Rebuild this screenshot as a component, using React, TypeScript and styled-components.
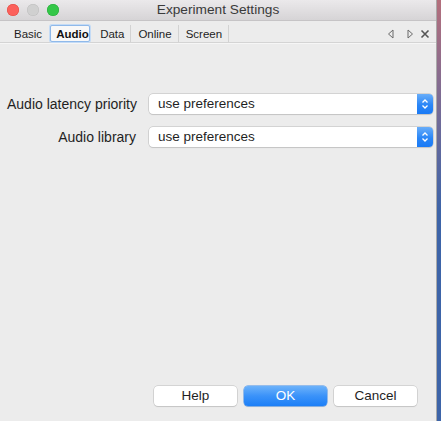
import React from 'react'
import styled, { createGlobalStyle } from 'styled-components'

const GlobalStyle = createGlobalStyle`
  html, body {
    margin: 0;
    padding: 0;
    height: 100%;
  }
  body {
    background: linear-gradient(180deg, #b46f7c 0%, #6c6a9a 30%, #3d64a8 50%, #3d64a8 100%);
    font-family: "Liberation Sans", Arial, sans-serif;
    overflow: hidden;
  }
`

const Desktop = styled.div`
  display: flex;
  width: 441px;
  height: 421px;
`

const Window = styled.div`
  width: 436px;
  height: 421px;
  border-right: 1px solid #a9a9a9;
  background: #ececec;
  display: flex;
  flex-direction: column;
`

const TitleBar = styled.div`
  height: 20px;
  display: grid;
  grid-template-columns: 1fr auto 1fr;
  align-items: center;
  padding: 0 7px;
  background: linear-gradient(180deg, #ebe9eb 0%, #d6d4d6 100%);
  border-bottom: 1px solid #c6c4c6;
`

const Lights = styled.div`
  display: flex;
  gap: 8px;
`

const Light = styled.span<{ $color: string; $edge: string }>`
  width: 12px;
  height: 12px;
  border-radius: 50%;
  background: ${p => p.$color};
  box-shadow: inset 0 0 0 0.5px ${p => p.$edge};
`

const Title = styled.div`
  font-size: 13.7px;
  color: #3a3a3a;
  margin-top: -1px;
`

const TabBar = styled.div`
  display: flex;
  align-items: flex-end;
  height: 21px;
  padding: 0 6px 0 7px;
  border-bottom: 1px solid #d4d4d4;
  box-shadow: 0 1px 0 #f6f6f6;
`

const Tabs = styled.div`
  display: flex;
  align-items: flex-end;
  flex: 1;
`

const Tab = styled.div<{ $active?: boolean }>`
  font-size: 11.5px;
  color: #1e1e1e;
  height: 17px;
  box-sizing: border-box;
  padding: 2px 6px 0 7px;
  line-height: 15px;
  border-right: 1px solid #d2d2d2;
  ${p =>
    p.$active &&
    `
    width: 40px;
    margin: 0 3px 0 1px;
    padding: 1px 0 0 5px;
    background: #f8f8f8;
    border: 1px solid #8fb9ea;
    border-radius: 2px;
    box-shadow: 0 0 0 1px #c4dbf5;
    font-weight: bold;
    color: #111;
  `}
  &:first-child {
    border-right: none;
    padding-right: 7px;
  }
`

const TabIcons = styled.div`
  display: flex;
  align-items: center;
  height: 17px;
`

const IconSlot = styled.span<{ $gap: number }>`
  display: flex;
  margin-left: ${p => p.$gap}px;
`

const Content = styled.div`
  flex: 1;
  display: flex;
  flex-direction: column;
  padding: 51px 3px 0 7px;
`

const Form = styled.div`
  display: grid;
  grid-template-columns: 129px 284px;
  column-gap: 13px;
  row-gap: 13px;
  align-items: center;
`

const Label = styled.div`
  font-size: 14px;
  color: #1f1f1f;
  text-align: right;
  white-space: nowrap;
`

const Select = styled.div`
  display: flex;
  height: 20px;
  background: #fff;
  border-radius: 4px;
  box-shadow: 0 0 0 0.5px #b9b9b9, 0 1px 1px rgba(0, 0, 0, 0.12);
  overflow: hidden;
`

const SelectText = styled.div`
  flex: 1;
  font-size: 13.5px;
  color: #1f1f1f;
  line-height: 20px;
  padding-left: 9px;
`

const Stepper = styled.div`
  width: 16px;
  display: flex;
  align-items: center;
  justify-content: center;
  background: linear-gradient(180deg, #68adf9 0%, #2a86f7 55%, #1a7af5 100%);
`

const Footer = styled.div`
  display: flex;
  justify-content: flex-end;
  gap: 7px;
  padding: 0 19px 15px 0;
`

const Button = styled.div<{ $primary?: boolean }>`
  width: 83px;
  height: 20px;
  border-radius: 4px;
  font-size: 13.5px;
  line-height: 20px;
  text-align: center;
  color: ${p => (p.$primary ? '#fff' : '#1f1f1f')};
  background: ${p =>
    p.$primary ? 'linear-gradient(180deg, #6cb2fa 0%, #3a92f9 50%, #1c7ff7 100%)' : '#fff'};
  box-shadow: ${p =>
    p.$primary
      ? '0 0 0 0.5px #3f8bea, 0 1px 1px rgba(0,0,0,0.12)'
      : '0 0 0 0.5px #bcbcbc, 0 1px 1px rgba(0,0,0,0.12)'};
`

const Spacer = styled.div`
  flex: 1;
`

const rows = [
  { label: 'Audio latency priority', value: 'use preferences' },
  { label: 'Audio library', value: 'use preferences' },
]

const tabs = ['Basic', 'Audio', 'Data', 'Online', 'Screen']

export default function App() {
  return (
    <>
      <GlobalStyle />
      <Desktop>
        <Window>
          <TitleBar>
            <Lights>
              <Light $color="#fc605b" $edge="#de4a42" />
              <Light $color="#d0d0d0" $edge="#bdbdbd" />
              <Light $color="#34c748" $edge="#27a93a" />
            </Lights>
            <Title>Experiment Settings</Title>
            <div />
          </TitleBar>

          <TabBar>
            <Tabs>
              {tabs.map(t => (
                <Tab key={t} $active={t === 'Audio'}>
                  {t}
                </Tab>
              ))}
            </Tabs>
            <TabIcons>
              <IconSlot $gap={0}>
                <svg width="10" height="10" viewBox="0 0 10 10">
                  <path d="M7 1 L2.5 5 L7 9 Z" fill="none" stroke="#6b6b6b" strokeWidth="1" />
                </svg>
              </IconSlot>
              <IconSlot $gap={9}>
                <svg width="10" height="10" viewBox="0 0 10 10">
                  <path d="M3 1 L7.5 5 L3 9 Z" fill="none" stroke="#6b6b6b" strokeWidth="1" />
                </svg>
              </IconSlot>
              <IconSlot $gap={5}>
                <svg width="10" height="10" viewBox="0 0 10 10">
                  <path d="M1.5 1.5 L8.5 8.5 M8.5 1.5 L1.5 8.5" stroke="#555" strokeWidth="1.6" />
                </svg>
              </IconSlot>
            </TabIcons>
          </TabBar>

          <Content>
            <Form>
              {rows.map(r => (
                <React.Fragment key={r.label}>
                  <Label>{r.label}</Label>
                  <Select>
                    <SelectText>{r.value}</SelectText>
                    <Stepper>
                      <svg width="8" height="12" viewBox="0 0 8 12">
                        <path d="M1.5 4.5 L4 2 L6.5 4.5 M1.5 7.5 L4 10 L6.5 7.5" fill="none" stroke="#fff" strokeWidth="1.3" />
                      </svg>
                    </Stepper>
                  </Select>
                </React.Fragment>
              ))}
            </Form>
            <Spacer />
          </Content>

          <Footer>
            <Button>Help</Button>
            <Button $primary>OK</Button>
            <Button>Cancel</Button>
          </Footer>
        </Window>
      </Desktop>
    </>
  )
}
